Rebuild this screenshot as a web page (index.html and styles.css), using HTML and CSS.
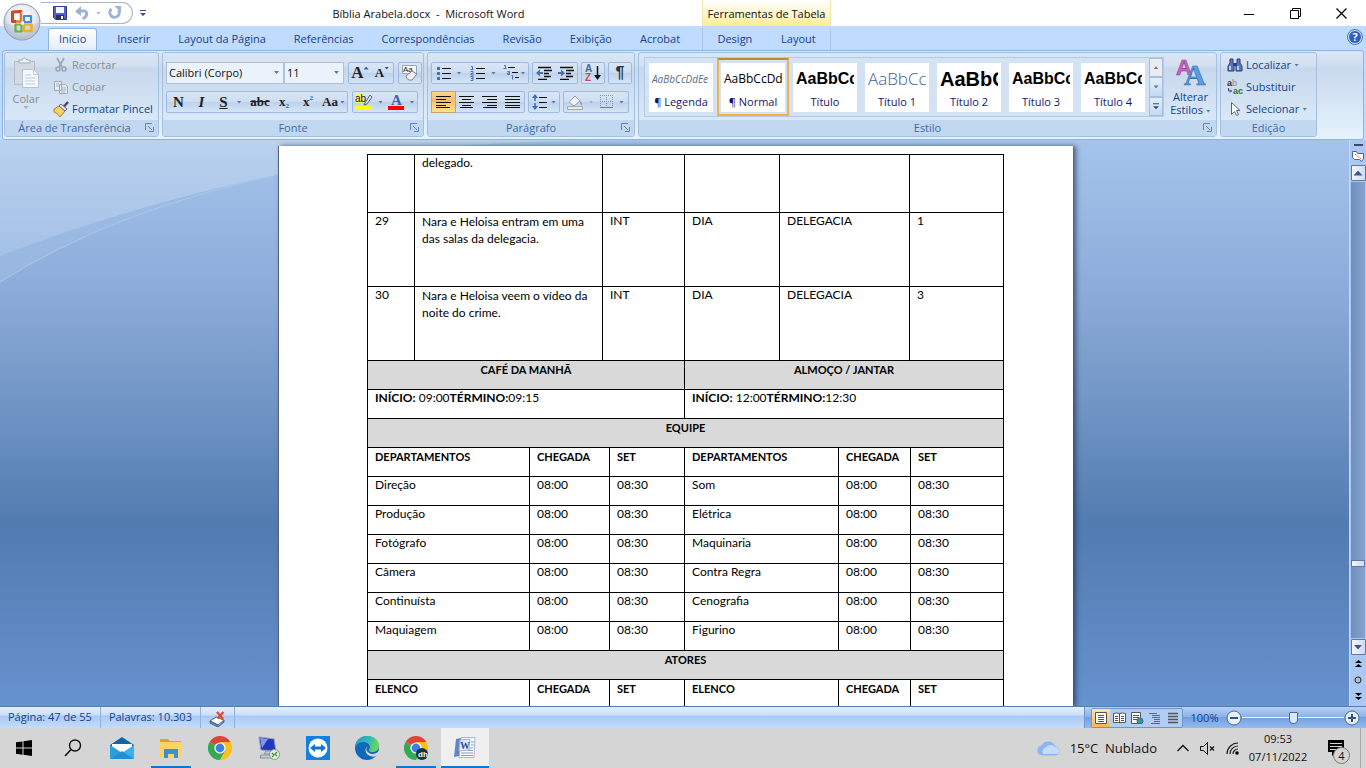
FILE: index.html
```html
<!DOCTYPE html>
<html lang="pt-BR">
<head>
  <meta charset="UTF-8">
  <meta name="viewport" content="width=device-width, initial-scale=1.0">
  <title>Bíblia Arabela.docx - Microsoft Word</title>
  <link rel="stylesheet" href="styles.css">
</head>
<body>
  <!-- Title bar -->
  <header class="titlebar">
    <button class="office-button" aria-label="Botão Office">
      <svg width="38" height="38" viewBox="0 0 38 38">
        <defs>
          <radialGradient id="orb" cx="50%" cy="35%" r="65%">
            <stop offset="0" stop-color="#ffffff"/>
            <stop offset="0.6" stop-color="#e4e9f1"/>
            <stop offset="1" stop-color="#a9b4c6"/>
          </radialGradient>
        </defs>
        <circle cx="19" cy="19" r="18" fill="url(#orb)" stroke="#8b97ab"/>
        <path d="M2 20a17 17 0 0 0 34 0q-17 5-34 0z" fill="#b9c4d6" opacity="0.5"/>
        <g fill="none" stroke-linejoin="round">
          <path d="M18 9V8.500L9.500 9v9.500H13" stroke="#d8431a" stroke-width="3"/>
          <path d="M13 18.500h5V10" stroke="#e8742a" stroke-width="2.600"/>
          <path d="M21 13h7v6h-7z" stroke="#3f8fd6" stroke-width="2.200"/>
          <path d="M12.500 21.500h6v7h-6z" stroke="#6fae3a" stroke-width="2.200"/>
          <path d="M21 21.500h7.500v6.500H21z" stroke="#f2b01e" stroke-width="2.600"/>
        </g>
        <path d="M18 18.500h3v3h-3z" fill="#fff"/>
      </svg>
    </button>
    <div class="quick-access">
      <button aria-label="Salvar">
        <svg width="16" height="16" viewBox="0 0 16 16">
          <path d="M1.500 1.500h13v13h-11l-2-2z" fill="#5561c4" stroke="#2c3786"/>
          <path d="M4 2h8v6H4z" fill="#f4f6ff"/>
          <path d="M4 10h8v4H4z" fill="#2b2f5e"/>
          <path d="M9 11h2v3H9z" fill="#fff"/>
        </svg>
      </button>
      <button class="undo" aria-label="Desfazer">
        <svg width="15" height="14" viewBox="0 0 15 14">
          <path d="M4 5h5.500q3.500 1 1.500 5l-3 3" fill="none" stroke="#9db3d6" stroke-width="3"/>
          <path d="M0 5.500L6 0v10z" fill="#9db3d6"/>
        </svg>
        <span class="arrow pale"></span>
      </button>
      <button aria-label="Refazer">
        <svg width="14" height="14" viewBox="0 0 14 14">
          <path d="M3.500 3A4.700 4.700 0 1 0 10.500 4" fill="none" stroke="#9db3d6" stroke-width="3"/>
          <path d="M6.500 0H13v6.500z" fill="#9db3d6"/>
        </svg>
      </button>
    </div>
    <button class="qat-more" aria-label="Personalizar"><span class="arrow barred"></span></button>
    <div class="doc-title">Bíblia Arabela.docx&nbsp; -&nbsp; Microsoft Word</div>
    <div class="context-title">Ferramentas de Tabela</div>
    <div class="window-controls">
      <button aria-label="Minimizar"><svg width="11" height="11"><path d="M0 6.500h10" stroke="#000"/></svg></button>
      <button aria-label="Restaurar"><svg width="11" height="11"><path d="M.5 2.500h8v8h-8zM2.500 2.500v-2h8v8h-2" fill="none" stroke="#000"/></svg></button>
      <button aria-label="Fechar"><svg width="11" height="11"><path d="M.5.5l10 10M10.500.5l-10 10" stroke="#000" stroke-width="1.200"/></svg></button>
    </div>
  </header>

  <!-- Ribbon tabs -->
  <nav class="tabs">
    <a href="#" class="tab active">Início</a>
    <a href="#" class="tab">Inserir</a>
    <a href="#" class="tab">Layout da Página</a>
    <a href="#" class="tab">Referências</a>
    <a href="#" class="tab">Correspondências</a>
    <a href="#" class="tab">Revisão</a>
    <a href="#" class="tab">Exibição</a>
    <a href="#" class="tab">Acrobat</a>
    <div class="context-tabs">
      <a href="#" class="tab">Design</a>
      <a href="#" class="tab">Layout</a>
    </div>
    <button class="help" aria-label="Ajuda">?</button>
  </nav>

  <!-- Ribbon -->
  <div class="ribbon">
    <section class="group clipboard">
      <div class="group-body">
        <button class="big disabled">
          <svg width="28" height="32" viewBox="0 0 28 32">
            <path d="M2.500 4.500h20v23h-20z" fill="#d3dae3" stroke="#b2bccb"/>
            <path d="M7 6V3h3q2-4 5 0h3v3z" fill="#eceff4" stroke="#a3aebf"/>
            <path d="M10.500 12.500h11l5 5v13h-16z" fill="#f7f9fc" stroke="#b4c2d6"/>
            <path d="M21.500 12.500v5h5M13 18h6M13 21h10M13 24h10M13 27h10" fill="none" stroke="#bccbe0"/>
          </svg>
          Colar
          <span class="arrow pale"></span>
        </button>
        <div class="stack">
          <button class="disabled">
            <svg width="16" height="16" viewBox="0 0 16 16"><path d="M4 1l5 9M11 1L6 10" stroke="#98a3b4" stroke-width="1.600"/><circle cx="5" cy="12" r="2" fill="none" stroke="#98a3b4" stroke-width="1.500"/><circle cx="11" cy="12" r="2" fill="none" stroke="#98a3b4" stroke-width="1.500"/></svg>
            Recortar
          </button>
          <button class="disabled">
            <svg width="16" height="16" viewBox="0 0 16 16"><path d="M1.500 2.500h7v9h-7zM6.500 5.500h6l2 2v7h-8z" fill="#e6ebf3" stroke="#9ca8bb"/><path d="M3 5h3M3 7h3M8 9h5M8 11h5M8 13h4" stroke="#a8b3c5"/></svg>
            Copiar
          </button>
          <button>
            <svg width="16" height="16" viewBox="0 0 16 16"><path d="M1 8l5-3 6 5-5 6q-2-4-6-5z" fill="#f5d469" stroke="#a98322"/><path d="M6 5l2-2 6 5-2 2z" fill="#e6e6ee" stroke="#666a80"/><path d="M11 5.500L15 1" stroke="#4c4670" stroke-width="2.500"/></svg>
            Formatar Pincel
          </button>
        </div>
      </div>
      <div class="group-name">Área de Transferência
        <button class="launcher" aria-label="Opções"><svg width="9" height="9"><path d="M.5 7V.5H7" fill="none" stroke="#6384b8"/><path d="M3 3l4 4M8.500 4v4.500H4" fill="none" stroke="#6384b8"/></svg></button>
      </div>
    </section>

    <section class="group font">
      <div class="group-body rows">
        <div class="row">
          <div class="combos">
            <label class="combo family"><select aria-label="Fonte"><option>Calibri (Corpo)</option></select></label>
            <label class="combo size"><select aria-label="Tamanho"><option>11</option></select></label>
          </div>
          <div class="cluster">
            <button class="serif grow">A<i class="caret up"></i></button>
            <button class="serif shrink">A<i class="caret"></i></button>
          </div>
          <div class="cluster">
            <button aria-label="Limpar formatação">
              <svg width="18" height="18" viewBox="0 0 18 18"><path d="M1.500 1.500h14v8h-14z" fill="#fff" stroke="#99a5b8"/><text x="2" y="8" font-size="8" font-family="Liberation Sans" fill="#111">Aa</text><path d="M5 12l6-5 5 3-5 6q-5 1-6-4z" fill="#f2eef4" stroke="#7d7f92"/></svg>
            </button>
          </div>
        </div>
        <div class="row">
          <div class="cluster wide">
            <button class="serif"><b>N</b></button>
            <button class="serif"><i>I</i></button>
            <button class="serif drop"><u>S</u><span class="arrow"></span></button>
            <button class="serif small"><s>abc</s></button>
            <button class="serif small">x<sub>2</sub></button>
            <button class="serif small">x<sup>2</sup></button>
            <button class="serif small tight">Aa<span class="arrow"></span></button>
          </div>
          <div class="cluster">
            <button class="drop" aria-label="Realce">
              <svg width="18" height="18" viewBox="0 0 18 18"><path d="M0 1h9v9H0z" fill="#fff36b"/><text x="0" y="9" font-size="10" font-family="Liberation Sans" fill="#111">ab</text><path d="M10 10l5-8 2 2-5 7-3 1z" fill="#dce4f0" stroke="#55617a"/><path d="M0 13h17v4H0z" fill="#ffff00"/></svg>
              <span class="arrow"></span>
            </button>
            <button class="drop" aria-label="Cor da fonte">
              <svg width="17" height="18" viewBox="0 0 17 18"><text x="3" y="12" font-size="15" font-weight="bold" font-family="Liberation Serif" fill="#3f62a8">A</text><path d="M0 13h16v4H0z" fill="#ff0000"/></svg>
              <span class="arrow"></span>
            </button>
          </div>
        </div>
      </div>
      <div class="group-name">Fonte
        <button class="launcher" aria-label="Opções"><svg width="9" height="9"><path d="M.5 7V.5H7" fill="none" stroke="#6384b8"/><path d="M3 3l4 4M8.500 4v4.500H4" fill="none" stroke="#6384b8"/></svg></button>
      </div>
    </section>

    <section class="group paragraph">
      <div class="group-body rows">
        <div class="row">
          <div class="cluster lists">
            <button aria-label="Marcadores">
              <svg width="14" height="14"><path d="M5 2.500h9M5 7.500h9M5 12.500h9" stroke="#111"/><path d="M0 1h3v3H0zM0 6h3v3H0zM0 11h3v3H0z" fill="#4d6fae"/></svg>
              <span class="arrow"></span>
            </button>
            <button aria-label="Numeração">
              <svg width="15" height="15"><path d="M6 2.500h9M6 7.500h9M6 12.500h9" stroke="#111"/><path d="M1 .5h1.500v3M.5 3.500h3M.5 5.500H3v2H1v1.500h3M.5 10.500H3v2H1M3 12.500v2H.5" fill="none" stroke="#4d6fae"/></svg>
              <span class="arrow"></span>
            </button>
            <button aria-label="Lista de vários níveis">
              <svg width="16" height="16"><path d="M5 2.500h7M9 7.500h6M12 12.500h4" stroke="#111"/><path d="M1 .5h1.500v3M.5 3.500h3M4.500 6.500h2v3h-2v-1.500h2M8.500 10.500h1v4" fill="none" stroke="#4d6fae"/></svg>
              <span class="arrow"></span>
            </button>
          </div>
          <div class="cluster">
            <button aria-label="Diminuir recuo">
              <svg width="16" height="14"><path d="M2 1.500h13M8 4.500h8M8 7.500h5M8 10.500h7M2 13.500h9" stroke="#111" stroke-width="1.500"/><path d="M7 7H3" stroke="#4d6fae" stroke-width="2"/><path d="M0 7l4-3.500v7z" fill="#4d6fae"/></svg>
            </button>
            <button aria-label="Aumentar recuo">
              <svg width="16" height="14"><path d="M2 1.500h13M8 4.500h8M8 7.500h5M8 10.500h7M2 13.500h9" stroke="#111" stroke-width="1.500"/><path d="M0 7h4" stroke="#4d6fae" stroke-width="2"/><path d="M7 7L3 3.500v7z" fill="#4d6fae"/></svg>
            </button>
          </div>
          <div class="cluster">
            <button aria-label="Classificar">
              <svg width="16" height="18"><text x="0" y="8" font-size="10" font-weight="bold" font-family="Liberation Sans" fill="#4766a5">A</text><text x="0" y="17" font-size="10" font-weight="bold" font-family="Liberation Sans" fill="#c05050">Z</text><path d="M12.500 2v11" stroke="#111" stroke-width="1.500"/><path d="M9 11h7l-3.500 5z" fill="#111"/></svg>
            </button>
          </div>
          <div class="cluster">
            <button class="pilcrow">¶</button>
          </div>
        </div>
        <div class="row">
          <div class="cluster aligns">
            <button class="on" aria-label="Esquerda"><svg width="15" height="12"><path d="M0 .5h15M0 3.500h10M0 6.500h15M0 9.500h10M0 11.500h14" stroke="#111"/></svg></button>
            <button aria-label="Centralizar"><svg width="15" height="12"><path d="M0 .5h15M3 3.500h9M0 6.500h15M3 9.500h9M1 11.500h13" stroke="#111"/></svg></button>
            <button aria-label="Direita"><svg width="15" height="12"><path d="M0 .5h15M5 3.500h10M0 6.500h15M5 9.500h10M1 11.500h14" stroke="#111"/></svg></button>
            <button aria-label="Justificar"><svg width="15" height="12"><path d="M0 .5h15M0 3.500h15M0 6.500h15M0 9.500h15M0 11.500h15" stroke="#111"/></svg></button>
          </div>
          <div class="cluster">
            <button class="spacing" aria-label="Espaçamento"><svg width="16" height="16"><path d="M7 3.500h8M7 8.500h8M7 13.500h8" stroke="#111"/><path d="M3 3v10" stroke="#3f6bb3" stroke-width="1.500" stroke-dasharray="4 2"/><path d="M0 4l3-4 3 4zM0 12l3 4 3-4z" fill="#3f6bb3"/></svg><span class="arrow"></span></button>
          </div>
          <div class="cluster">
            <button class="drop" aria-label="Sombreamento"><svg width="17" height="16"><path d="M2 8l6-6 5 5-6 5z" fill="#eef1f6" stroke="#98a2b3"/><path d="M12 6q4 2 3 6-2-2-3-6z" fill="#98a2b3"/><path d="M.5 12.500h15v3H.5z" fill="#e9ecea" stroke="#a5a99f"/></svg><span class="arrow pale"></span></button>
            <button class="drop" aria-label="Bordas"><svg width="14" height="14"><path d="M.5 0v13M6.500 0v13M12.500 0v13M0 .5h13M0 6.500h13" stroke="#8192b2" stroke-dasharray="1 1" fill="none"/><path d="M0 12.500h13" stroke="#6c7991"/></svg><span class="arrow"></span></button>
          </div>
        </div>
      </div>
      <div class="group-name">Parágrafo
        <button class="launcher" aria-label="Opções"><svg width="9" height="9"><path d="M.5 7V.5H7" fill="none" stroke="#6384b8"/><path d="M3 3l4 4M8.500 4v4.500H4" fill="none" stroke="#6384b8"/></svg></button>
      </div>
    </section>

    <section class="group styles">
      <div class="group-body">
        <div class="gallery">
          <button class="style"><span class="sample s-legend">AaBbCcDdEe</span><span class="style-name">¶ Legenda</span></button>
          <button class="style selected"><span class="sample s-normal">AaBbCcDd</span><span class="style-name">¶ Normal</span></button>
          <button class="style"><span class="sample s-bold">AaBbCc</span><span class="style-name">Título</span></button>
          <button class="style"><span class="sample s-light">AaBbCc</span><span class="style-name">Título 1</span></button>
          <button class="style"><span class="sample s-large">AaBbC</span><span class="style-name">Título 2</span></button>
          <button class="style"><span class="sample s-bold">AaBbCc</span><span class="style-name">Título 3</span></button>
          <button class="style"><span class="sample s-bold">AaBbCc</span><span class="style-name">Título 4</span></button>
          <div class="gallery-scroll">
            <button class="off" aria-label="Acima"><span class="arrow up"></span></button>
            <button aria-label="Abaixo"><span class="arrow"></span></button>
            <button aria-label="Mais"><span class="arrow barred"></span></button>
          </div>
        </div>
        <button class="big change-styles">
          <svg width="30" height="30" viewBox="0 0 30 30">
            <text x="0" y="18" font-size="22" font-weight="bold" font-family="Liberation Sans" fill="#c765c0" stroke="#8d3b92" stroke-width=".6">A</text>
            <text x="8" y="28" font-size="30" font-weight="bold" font-family="Liberation Serif" fill="#5a9ee0" stroke="#2c66ae" stroke-width=".6">A</text>
          </svg>
          <span>Alterar</span>
          <span>Estilos <i class="arrow"></i></span>
        </button>
      </div>
      <div class="group-name">Estilo
        <button class="launcher" aria-label="Opções"><svg width="9" height="9"><path d="M.5 7V.5H7" fill="none" stroke="#6384b8"/><path d="M3 3l4 4M8.500 4v4.500H4" fill="none" stroke="#6384b8"/></svg></button>
      </div>
    </section>

    <section class="group editing">
      <div class="group-body">
        <div class="stack">
          <button>
            <svg width="16" height="14" viewBox="0 0 16 14"><path d="M3 1h3v4l1 2v6H1V8l2-3zM10 1h3v4l2 3v5H9V7l1-2z" fill="#5d78b4" stroke="#263f7e"/><path d="M6 5h4v3H6z" fill="#263f7e"/><path d="M3 8v4M11 8v4" stroke="#dce7fb" stroke-width="1.500"/></svg>
            Localizar <span class="arrow"></span>
          </button>
          <button>
            <svg width="16" height="16" viewBox="0 0 16 16"><text x="0" y="7" font-size="9" font-weight="bold" font-family="Liberation Sans" fill="#333">a</text><text x="5" y="7" font-size="9" font-family="Liberation Sans" fill="#888">b</text><text x="6" y="15" font-size="9" font-weight="bold" font-family="Liberation Sans" fill="#227a30">ac</text><path d="M1.500 9v3h3M3 10.500l1.500 1.500L3 13.500" fill="none" stroke="#334a80"/></svg>
            Substituir
          </button>
          <button>
            <svg width="16" height="16" viewBox="0 0 16 16"><path d="M4.500 1.500v12l3-3 2 4 2-1-2-4h3.500z" fill="#fff" stroke="#59657c"/></svg>
            Selecionar <span class="arrow"></span>
          </button>
        </div>
      </div>
      <div class="group-name">Edição</div>
    </section>
  </div>

  <!-- Document -->
  <main class="workspace">
    <svg class="swoosh" width="620" height="150" viewBox="0 0 620 150">
      <defs>
        <linearGradient id="sky" x1="0" y1="0" x2="0" y2="1">
          <stop offset="0" stop-color="#bad1ef"/>
          <stop offset="1" stop-color="#a4c1e6"/>
        </linearGradient>
      </defs>
      <path d="M0 0h620Q420 0 279 34Q110 72 0 142z" fill="#9dbbe2" opacity="0.700"/>
      <path d="M0 142Q110 72 279 34" fill="none" stroke="#a9c8ec"/>
      <path d="M0 0h620Q420 0 279 34Q130 66 0 116z" fill="url(#sky)"/>
    </svg>
    <div class="canvas">
      <article class="page">
        <table class="scenes">
          <colgroup><col class="w47"><col class="w188"><col class="w82"><col class="w95"><col class="w130"><col class="w94"></colgroup>
          <tr class="cut"><td></td><td>delegado.</td><td></td><td></td><td></td><td></td></tr>
          <tr><td>29</td><td class="action">Nara e Heloisa entram em uma das salas da delegacia.</td><td>INT</td><td>DIA</td><td>DELEGACIA</td><td>1</td></tr>
          <tr><td>30</td><td class="action">Nara e Heloisa veem o vídeo da noite do crime.</td><td>INT</td><td>DIA</td><td>DELEGACIA</td><td>3</td></tr>
        </table>
        <table class="crew">
          <colgroup><col class="w162"><col class="w80"><col class="w75"><col class="w154"><col class="w72"><col class="w93"></colgroup>
          <tr class="band"><th colspan="3">CAFÉ DA MANHÃ</th><th colspan="3">ALMOÇO / JANTAR</th></tr>
          <tr><td colspan="3"><b>INÍCIO:</b> 09:00<b>TÉRMINO:</b>09:15</td><td colspan="3"><b>INÍCIO:</b> 12:00<b>TÉRMINO:</b>12:30</td></tr>
          <tr class="band"><th colspan="6">EQUIPE</th></tr>
          <tr><th>DEPARTAMENTOS</th><th>CHEGADA</th><th>SET</th><th>DEPARTAMENTOS</th><th>CHEGADA</th><th>SET</th></tr>
          <tr><td>Direção</td><td>08:00</td><td>08:30</td><td>Som</td><td>08:00</td><td>08:30</td></tr>
          <tr><td>Produção</td><td>08:00</td><td>08:30</td><td>Elétrica</td><td>08:00</td><td>08:30</td></tr>
          <tr><td>Fotógrafo</td><td>08:00</td><td>08:30</td><td>Maquinaria</td><td>08:00</td><td>08:30</td></tr>
          <tr><td>Câmera</td><td>08:00</td><td>08:30</td><td>Contra Regra</td><td>08:00</td><td>08:30</td></tr>
          <tr><td>Continuísta</td><td>08:00</td><td>08:30</td><td>Cenografia</td><td>08:00</td><td>08:30</td></tr>
          <tr><td>Maquiagem</td><td>08:00</td><td>08:30</td><td>Figurino</td><td>08:00</td><td>08:30</td></tr>
          <tr class="band"><th colspan="6">ATORES</th></tr>
          <tr><th>ELENCO</th><th>CHEGADA</th><th>SET</th><th>ELENCO</th><th>CHEGADA</th><th>SET</th></tr>
        </table>
      </article>
    </div>
    <div class="scrollbar">
      <span class="split"></span>
      <button class="plain" aria-label="Régua"><svg width="12" height="12"><path d="M.5 1.500h4l1 2h6v5l-2 3-2-2h-5l-2-2z" fill="#fff" stroke="#55607a"/><path d="M3 4l6 5" stroke="#c34b4b" stroke-dasharray="2 1"/></svg></button>
      <button class="scroll-btn" aria-label="Rolar para cima"><i class="caret up"></i></button>
      <div class="track"><span class="thumb"></span></div>
      <button class="scroll-btn" aria-label="Rolar para baixo"><i class="caret"></i></button>
      <button class="plain" aria-label="Página anterior"><svg width="7" height="8"><path d="M0 3l3.500-3L7 3zM0 7l3.500-3L7 7z"/></svg></button>
      <button class="plain" aria-label="Selecionar objeto"><svg width="8" height="8"><circle cx="4" cy="4" r="3" fill="#b9bfc9" stroke="#222"/></svg></button>
      <button class="plain" aria-label="Próxima página"><svg width="7" height="8"><path d="M0 1l3.500 3L7 1zM0 5l3.500 3L7 5z"/></svg></button>
    </div>
  </main>

  <!-- Status bar -->
  <footer class="statusbar">
    <span class="status-item">Página: 47 de 55</span>
    <span class="status-item">Palavras: 10.303</span>
    <button class="status-item proof" aria-label="Revisão">
      <svg width="17" height="16" viewBox="0 0 17 16"><path d="M1 10l6-4 8 3-6 5z" fill="#fff" stroke="#46608f"/><path d="M1 10v2l8 4v-2zM9 16l6-5V9" fill="#6f8fc8" stroke="#46608f"/><path d="M8 1l6 7M14.500 1L8.500 7.500" stroke="#e8452a" stroke-width="2.200"/></svg>
    </button>
    <div class="status-right">
      <div class="views">
        <button class="on" aria-label="Layout de impressão"><svg width="12" height="12"><path d="M.5.5h11v11H.5z" fill="#fff" stroke="#555"/><path d="M3 3.500h6M3 5.500h6M3 7.500h6M3 9.500h6" stroke="#555"/></svg></button>
        <button aria-label="Leitura"><svg width="13" height="12"><path d="M.5 1.500q3-1 6 0 3-1 6 0v9h-12z" fill="#fff" stroke="#555"/><path d="M6.500 1v10M2 4.500h3M2 6.500h3M2 8.500h3M8 4.500h3M8 6.500h3M8 8.500h3" stroke="#555"/></svg></button>
        <button aria-label="Web"><svg width="13" height="12"><path d="M.5.5h9v11h-9z" fill="#fff" stroke="#555"/><path d="M2 3.500h6M2 5.500h6M2 7.500h4" stroke="#555"/><circle cx="9" cy="9" r="3" fill="#3a9b8b" stroke="#35659e"/></svg></button>
        <button aria-label="Tópicos"><svg width="12" height="12"><path d="M0 1.500h8M3 3.500h8M3 5.500h8M5 7.500h6M5 9.500h6M2 11.500h9" stroke="#666"/></svg></button>
        <button aria-label="Rascunho"><svg width="12" height="12"><path d="M1 1.500h10M1 4.500h10M1 7.500h10M1 10.500h10" stroke="#555" stroke-width="1.300"/></svg></button>
      </div>
      <button class="zoom-value">100%</button>
      <button class="zoom-btn" aria-label="Reduzir"><svg width="16" height="16"><circle cx="8" cy="8" r="7" fill="#e6f0fd" stroke="#4a6898"/><path d="M4 8h8" stroke="#35527f" stroke-width="2"/></svg></button>
      <input type="range" class="zoom-slider" aria-label="Zoom" min="0" max="100" value="50">
      <button class="zoom-btn" aria-label="Ampliar"><svg width="16" height="16"><circle cx="8" cy="8" r="7" fill="#e6f0fd" stroke="#4a6898"/><path d="M4 8h8M8 4v8" stroke="#35527f" stroke-width="2"/></svg></button>
    </div>
  </footer>

  <!-- Windows taskbar -->
  <div class="taskbar">
    <button aria-label="Iniciar"><svg width="16" height="16"><path d="M0 2.300l6.500-.9v6.200H0zM7.500 1.200L16 0v7.600H7.500zM0 8.500h6.500v6.200L0 13.800zM7.500 8.500H16V16l-8.500-1.200z"/></svg></button>
    <button aria-label="Pesquisar"><svg width="18" height="18"><circle cx="11" cy="6.500" r="5.500" fill="none" stroke="#111" stroke-width="1.400"/><path d="M7 10.500l-6 6.500" stroke="#111" stroke-width="1.500"/></svg></button>
    <button aria-label="Email">
      <svg width="26" height="24" viewBox="0 0 26 24"><path d="M1 9L13 1l12 8v4H1z" fill="#1266a8"/><path d="M3 8h20v9H3z" fill="#fff"/><path d="M1 9l12 8-12 6z" fill="#2a9fe0"/><path d="M25 9L13 17l12 6z" fill="#37b4f0"/><path d="M1 23l12-8 12 8z" fill="#1f8fd8"/></svg>
    </button>
    <button class="running" aria-label="Explorador">
      <svg width="24" height="20" viewBox="0 0 24 20"><path d="M1 1h8l2 2h11v4H1z" fill="#e0a126"/><path d="M1 4h22v15H1z" fill="#fbd467"/><path d="M5 11h14v9h-4v-4H9v4H5z" fill="#3e8ed6"/></svg>
    </button>
    <button aria-label="Chrome">
      <svg width="24" height="24" viewBox="0 0 24 24"><path d="M12 12L1.600 6a12 12 0 0 1 20.800 0z" fill="#df4435"/><path d="M12 12L1.600 6A12 12 0 0 0 12 24l5-9z" fill="#34a853"/><path d="M12 24A12 12 0 0 0 22.400 6H12l5.200 9z" fill="#fbc116"/><circle cx="12" cy="12" r="5.600" fill="#fff"/><circle cx="12" cy="12" r="4.400" fill="#3f7ee8"/></svg>
    </button>
    <button aria-label="Área de trabalho remota">
      <svg width="24" height="24" viewBox="0 0 24 24"><path d="M2 1l15 2 2 12-15-1z" fill="#2437b8" stroke="#8c97c8"/><path d="M3 2l8 1-6 9z" fill="#7f97ee"/><path d="M9 15h6v3H7zM4 19h11v3H3z" fill="#c7ccd6" stroke="#8a91a0"/><circle cx="17.500" cy="18.500" r="5" fill="#e6ece4" stroke="#8a9a86"/><path d="M15 17l2 2-2 2M20 16l-2 2 2 2" fill="none" stroke="#3b8f35" stroke-width="1.200"/></svg>
    </button>
    <button aria-label="TeamViewer">
      <svg width="24" height="24" viewBox="0 0 24 24"><path d="M0 0h24v24H0z" fill="#1180e0"/><circle cx="12" cy="12" r="9.500" fill="#fff"/><path d="M4 12l5-4v2.500h6V8l5 4-5 4v-2.500H9V16z" fill="#1172cf"/></svg>
    </button>
    <button aria-label="Edge">
      <svg width="24" height="24" viewBox="0 0 24 24">
        <defs><linearGradient id="edge" x1="0" y1="0" x2="1" y2="0.300"><stop offset="0" stop-color="#2196d8"/><stop offset="0.600" stop-color="#31bdb5"/><stop offset="1" stop-color="#65d45f"/></linearGradient></defs>
        <circle cx="12" cy="12" r="12" fill="#1268b8"/>
        <path d="M0 12C0 4 6 0 12 0c8 0 12 5 12 10 0 4-3 6-7 6-3 0-4-2-2-4 0-4-3-6-7-6s-7 3-8 6z" fill="url(#edge)"/>
        <path d="M13 10c-3 2-2 7 4 8 3 0 5-1 7-3v9h-2l1-5c-3 2-5 2-8 1-5-2-6-8-2-10z" fill="#d5d5d5"/>
      </svg>
    </button>
    <button class="running" aria-label="Chrome perfil">
      <svg width="24" height="24" viewBox="0 0 24 24"><path d="M12 12L1.600 6a12 12 0 0 1 20.800 0z" fill="#df4435"/><path d="M12 12L1.600 6A12 12 0 0 0 12 24l5-9z" fill="#34a853"/><path d="M12 24A12 12 0 0 0 22.400 6H12l5.200 9z" fill="#fbc116"/><circle cx="12" cy="12" r="5.600" fill="#fff"/><circle cx="12" cy="12" r="4.400" fill="#3f7ee8"/><circle cx="18" cy="18" r="6" fill="#0e3440"/><text x="14" y="21" font-size="8" font-weight="bold" font-family="Liberation Sans" fill="#fff">dh</text></svg>
    </button>
    <button class="running current" aria-label="Word">
      <svg width="24" height="24" viewBox="0 0 24 24"><path d="M8 1.500h14l-1 20H6z" fill="#fff" stroke="#aab6cc"/><path d="M16 12h4M15 14.500h5M8 17h12M8 19.500h12M18 6h3M18 9h3" stroke="#7c97c9"/><path d="M3 3L1 21l5-1L8 2z" fill="#5f86c8"/><path d="M7 4l10-1-1 11-10 1z" fill="#e3ebf8" stroke="#9db2d8"/><text x="7" y="13" font-size="10" font-weight="bold" font-family="Liberation Serif" fill="#2c4f9c">W</text></svg>
    </button>

    <div class="tray">
      <button class="weather">
        <svg width="26" height="16" viewBox="0 0 26 16"><path d="M6 15.500a5 5 0 0 1-.5-9.900A7.500 7.500 0 0 1 19 6a5 5 0 0 1 1.500 9.500z" fill="#8db5ef"/><path d="M7 14a5 5 0 0 1 3-7 6 6 0 0 1 9 0 4 4 0 0 1 3 7z" fill="#c5dbfa"/></svg>
        <span>15°C&nbsp; Nublado</span>
      </button>
      <button aria-label="Ícones ocultos"><svg width="12" height="8"><path d="M.5 7L6 1.500 11.500 7" fill="none" stroke="#111" stroke-width="1.300"/></svg></button>
      <button aria-label="Volume"><svg width="15" height="13"><path d="M.5 4.500h3l4-4v12l-4-4h-3z" fill="none" stroke="#111"/><path d="M10 4.500l4 4M14 4.500l-4 4" stroke="#111" stroke-width="1.200"/></svg></button>
      <button aria-label="Rede"><svg width="14" height="13"><path d="M1 12A11 11 0 0 1 12 1M4 12a8 8 0 0 1 8-8M7 12a5 5 0 0 1 5-5" fill="none" stroke="#222" stroke-width="1.200"/><circle cx="11" cy="11" r="1.800"/></svg></button>
      <button class="clock"><time>09:53</time><time>07/11/2022</time></button>
      <button class="notify" aria-label="Notificações"><svg width="16" height="16"><path d="M0 0h16v12h-8l-4 4v-4H0z"/><path d="M2 3.500h12M2 6.500h12M2 9.500h7" stroke="#d5d5d5"/></svg><span class="badge">4</span></button>
    </div>
  </div>
</body>
</html>
```
FILE: styles.css
```css
* {
  box-sizing: border-box;
}
body {
  margin: 0;
  height: 100vh;
  display: flex;
  flex-direction: column;
  overflow: hidden;
  font-family: "Open Sans", "Noto Sans", sans-serif;
  font-size: 11px;
  line-height: 14px;
  color: #15428b;
  background-color: #bfdbff;
}
button {
  font: inherit;
  color: inherit;
  background: none;
  border: none;
  padding: 0;
  display: flex;
  align-items: center;
  justify-content: center;
}
svg {
  display: block;
  flex: none;
}

/* small drop-down triangles */
.arrow {
  display: inline-block;
  flex: none;
  width: 5px;
  height: 3px;
  background-color: #5a7cb0;
  clip-path: polygon(0 0, 100% 0, 50% 100%);
}
.arrow.up {
  clip-path: polygon(50% 0, 100% 100%, 0 100%);
}
.arrow.pale {
  background-color: #a5b1c4;
}
.arrow.barred {
  height: 6px;
  width: 6px;
  background-color: #2f4f86;
  clip-path: polygon(0 0, 100% 0, 100% 17%, 0 17%, 0 50%, 100% 50%, 50% 100%, 0 50%);
}
.caret {
  width: 5px;
  height: 3px;
  background-color: #3c5a91;
  clip-path: polygon(0 0, 100% 0, 50% 100%);
}
.caret.up {
  clip-path: polygon(50% 0, 100% 100%, 0 100%);
}

/* title bar */
.titlebar {
  flex: none;
  height: 26px;
  display: flex;
  align-items: center;
  position: relative;
  padding-right: 2px;
  background-color: #fff;
  color: #111;
}
.office-button {
  position: absolute;
  left: 3px;
  top: 3px;
  z-index: 2;
}
.quick-access {
  width: 92px;
  height: 22px;
  margin-left: 41px;
  padding-left: 11px;
  display: flex;
  align-items: center;
  gap: 7px;
  border: 1px solid #a9b3c4;
  border-left: none;
  border-radius: 0 11px 11px 0;
}
.undo {
  gap: 6px;
}
.qat-more {
  width: 20px;
  height: 20px;
}
.doc-title {
  flex: 0 1 549px;
  padding: 2px 0 0 2px;
  text-align: center;
  white-space: nowrap;
}
.context-title {
  width: 129px;
  height: 26px;
  padding-top: 7px;
  text-align: center;
  white-space: nowrap;
  border: 1px solid #eee3ae;
  border-width: 0 1px;
  background: linear-gradient(#ffffff, #fdf5c8 60%, #ffed8e);
}
.window-controls {
  display: flex;
  margin-left: auto;
}
.window-controls button {
  width: 46px;
  height: 26px;
}

/* tabs */
.tabs {
  flex: none;
  height: 24px;
  display: flex;
  padding: 2px 4px 0 48px;
  background-color: #bfdbff;
}
.tab {
  padding: 4px 14px 0;
  color: #15428b;
  text-decoration: none;
  white-space: nowrap;
}
.tab.active {
  padding: 3px 10px 0;
  margin-right: 6px;
  border: 1px solid #8db2e3;
  border-bottom: none;
  border-radius: 3px 3px 0 0;
  background: linear-gradient(#ffffff, #e3eefb);
}
.context-tabs {
  width: 129px;
  display: flex;
  justify-content: space-around;
  margin-left: 8px;
  border: 1px solid #a8c4ea;
  border-width: 0 1px;
}
.context-tabs .tab {
  padding: 4px 0 0;
}
.help {
  width: 14px;
  height: 14px;
  margin: 2px 0 0 auto;
  border-radius: 50%;
  border: 1px solid #dce9ff;
  outline: 1px solid #4c74b8;
  background-color: #2f5fc4;
  color: #fff;
  font-weight: bold;
}

/* ribbon */
.ribbon {
  flex: none;
  height: 90px;
  margin: 0 2px;
  padding: 1px 1px 2px;
  display: flex;
  gap: 3px;
  border: 1px solid #8db2e3;
  border-radius: 3px;
  background: linear-gradient(#dbe6f4, #cbdcf0 18%, #c9daee 20%, #e4f3fd);
  overflow: hidden;
}
.group {
  flex: none;
  display: flex;
  flex-direction: column;
  border: 1px solid #a5bfdf;
  border-radius: 3px;
  overflow: hidden;
  background: linear-gradient(#dce7f5, #d2dfef 16%, #c8d8ec 18%, #d8e8f8 80%);
}
.clipboard {
  width: 155px;
}
.font {
  width: 262px;
}
.paragraph {
  width: 208px;
}
.styles {
  width: 579px;
}
.editing {
  width: 97px;
}
.group-body {
  flex: 1;
  display: flex;
}
.group-name {
  flex: none;
  position: relative;
  height: 16px;
  line-height: 16px;
  text-align: center;
  color: #3e6aaa;
  background-color: #c2d8f0;
}
.clipboard .group-name {
  padding-right: 14px;
}
.launcher {
  position: absolute;
  right: 4px;
  top: 3px;
}
.big {
  width: 42px;
  flex-direction: column;
  justify-content: flex-start;
  padding-top: 4px;
}
.big svg {
  margin-bottom: 3px;
}
.disabled {
  color: #8d8d8d;
}
.stack {
  display: flex;
  flex-direction: column;
  padding: 1px 0 0 6px;
}
.stack button {
  height: 22px;
  gap: 3px;
  justify-content: flex-start;
  white-space: nowrap;
}
.rows {
  flex-direction: column;
  padding: 9px 3px 0;
  gap: 7px;
}
.row {
  display: flex;
  gap: 4px;
}
.paragraph .row {
  gap: 3px;
}
.cluster {
  height: 22px;
  display: flex;
  border: 1px solid #9ebae1;
  border-radius: 2px;
  background: linear-gradient(#d9e6f6, #cdddf1 48%, #bfd2ec 52%, #d4e5f7);
}
.cluster button {
  width: 22px;
  white-space: nowrap;
}
.cluster .drop {
  width: 32px;
  gap: 5px;
}
.combos {
  display: flex;
}
.combo {
  position: relative;
  height: 22px;
}
.combo::after {
  content: "";
  position: absolute;
  right: 5px;
  top: 9px;
  width: 5px;
  height: 3px;
  background-color: #5a7cb0;
  clip-path: polygon(0 0, 100% 0, 50% 100%);
}
.combo select {
  appearance: none;
  width: 100%;
  height: 22px;
  padding: 0 2px;
  border: 1px solid #abc1de;
  border-radius: 0;
  font: inherit;
  color: #111;
  background-color: #eaf2fb;
}
.family {
  width: 118px;
}
.size {
  width: 60px;
}
.serif {
  font-family: "Liberation Serif", serif;
  font-size: 15px;
  font-weight: bold;
  color: #222;
}
.grow {
  font-size: 17px;
}
.shrink {
  font-size: 13px;
}
.grow .caret,
.shrink .caret {
  margin-bottom: 10px;
}
.serif.small {
  font-size: 13px;
}
.wide button {
  width: 23px;
}
.wide .drop {
  width: 35px;
  gap: 9px;
}
.wide .small {
  width: 24px;
}
.wide .tight {
  width: 27px;
  gap: 2px;
}
sub,
sup {
  font-size: 7px;
  line-height: 7px;
  color: #2f5fb0;
}
sub {
  padding-top: 8px;
}
sup {
  padding-bottom: 8px;
}
.cluster .pilcrow {
  font-family: "Liberation Sans", sans-serif;
  font-size: 16px;
  font-weight: bold;
  color: #333;
}
.lists button {
  width: 34px;
  gap: 6px;
}
.lists button:last-child {
  width: 28px;
  gap: 2px;
}
.cluster .spacing {
  width: 30px;
  gap: 3px;
}
.aligns .on {
  background: linear-gradient(#fbd58f, #f9b85c 48%, #fbc76b 52%, #fee08e);
  outline: 1px solid #c2a373;
}
.cluster.aligns button {
  width: 23px;
}

/* style gallery */
.styles .group-body {
  padding: 4px 4px 3px 5px;
  gap: 5px;
}
.gallery {
  height: 60px;
  display: flex;
  border: 1px solid #b4cbe8;
  background-color: #d4e3f4;
}
.style {
  width: 72px;
  padding: 4px 3px 3px;
  flex-direction: column;
  align-items: stretch;
  justify-content: flex-start;
  border: 1px solid transparent;
}
.style.selected {
  border: 2px solid #eeb24a;
  border-top-color: #c28a30;
  padding: 3px 2px 2px;
}
.sample {
  height: 32px;
  padding: 0 3px;
  line-height: 32px;
  text-align: left;
  white-space: nowrap;
  overflow: hidden;
  color: #000;
  background-color: #fff;
  border-right: 3px solid #fff;
}
.style-name {
  height: 17px;
  background-color: #fff;
  color: #15156b;
}
.s-legend {
  font-size: 10px;
  font-style: italic;
  color: #5a6b85;
}
.s-normal {
  font-size: 12px;
}
.s-bold {
  font-family: "Liberation Sans", sans-serif;
  font-size: 16px;
  font-weight: bold;
}
.s-light {
  font-size: 17px;
  font-weight: 300;
  color: #44618f;
}
.s-large {
  font-family: "Liberation Sans", sans-serif;
  font-size: 20px;
  font-weight: bold;
}
.gallery-scroll {
  width: 14px;
  display: flex;
  flex-direction: column;
}
.gallery-scroll button {
  flex: 1;
  border: 1px solid #a5bfdf;
  background: linear-gradient(#e4eefa, #c6d9f1);
}
.gallery-scroll .off {
  background: #ececee;
}
.big.change-styles {
  width: 44px;
  padding-top: 0;
  line-height: 13px;
  white-space: nowrap;
}
.change-styles .arrow {
  vertical-align: middle;
}

/* document area */
.workspace {
  flex: 1;
  min-height: 0;
  display: flex;
  position: relative;
  background: linear-gradient(#a5c4ec, #8baad8 28%, #6f94c4 48%, #527bb0 68%, #6692ce);
}
.swoosh {
  position: absolute;
  left: 0;
  top: 0;
}
.canvas {
  flex: 1;
  position: relative;
  display: flex;
  justify-content: center;
  padding: 6px 0 0 2px;
  overflow: hidden;
}
.page {
  width: 795px;
  padding: 8px 0 0 88px;
  border-left: 1px solid #56657b;
  box-shadow: 3px 0 5px rgba(30, 50, 80, 0.7);
  background-color: #fff;
  color: #000;
  font-family: Lato, "Open Sans", sans-serif;
  font-size: 12px;
}
table {
  width: 637px;
  table-layout: fixed;
  border-collapse: collapse;
}
td,
th {
  height: 29px;
  padding: 0 7px;
  border: 1px solid #000;
  vertical-align: top;
  text-align: left;
  line-height: 15px;
}
.scenes td {
  height: 74px;
}
.scenes .cut td {
  height: 58px;
}
.scenes .action {
  line-height: 17px;
}
.crew {
  margin-top: -1px;
}
th {
  font-size: 11px;
  line-height: 17px;
}
.band th {
  text-align: center;
  background-color: #d9d9d9;
}
.w47 { width: 47px; }
.w72 { width: 72px; }
.w75 { width: 75px; }
.w80 { width: 80px; }
.w82 { width: 82px; }
.w93 { width: 93px; }
.w94 { width: 94px; }
.w95 { width: 95px; }
.w130 { width: 130px; }
.w154 { width: 154px; }
.w162 { width: 162px; }
.w188 { width: 188px; }

.scrollbar {
  position: relative;
  width: 17px;
  display: flex;
  flex-direction: column;
  align-items: center;
  padding: 4px 0 2px;
  border-left: 1px solid #c3d9f7;
  background-color: #abc8f4;
}
.split {
  width: 9px;
  height: 2px;
  margin-bottom: 2px;
  background-color: #3d4a63;
}
.plain {
  height: 16px;
}
.scroll-btn {
  width: 15px;
  height: 16px;
  margin: 1px 0;
  border: 1px solid #5f79a6;
  border-radius: 1px;
  background: linear-gradient(90deg, #f5f8fd, #cfdaec);
}
.scroll-btn .caret {
  width: 9px;
  height: 5px;
}
.track {
  flex: 1;
  width: 14px;
  position: relative;
  background: linear-gradient(90deg, #6f8fbc, #86a4cd);
}
.thumb {
  position: absolute;
  top: 83%;
  left: 0;
  width: 14px;
  height: 7px;
  border: 1px solid #5f79a6;
  background: linear-gradient(90deg, #f5f8fd, #cfdaec);
}

/* status bar */
.statusbar {
  flex: none;
  height: 22px;
  display: flex;
  border-top: 1px solid #567db1;
  background: linear-gradient(#e2eefd, #cfe1fa 35%, #a9caf7 45%, #c5dcfa);
}
.status-item {
  padding: 2px 8px 0;
  border-right: 1px solid #8fb1e0;
  line-height: 15px;
}
.proof {
  width: 34px;
}
.status-right {
  margin-left: auto;
  padding: 0 6px;
  display: flex;
  align-items: center;
  border-left: 1px solid #7398cf;
  background: linear-gradient(#b5d1f7, #8db3e8 45%, #75a0e0 50%, #94baee);
}
.views {
  display: flex;
  border: 1px solid #6f95cd;
  border-radius: 2px;
  background-color: #b3cdf2;
}
.views button {
  width: 18px;
  height: 18px;
}
.views .on {
  background: linear-gradient(#fde3ae, #f8b755);
}
.zoom-value {
  width: 43px;
}
.zoom-slider {
  appearance: none;
  width: 102px;
  height: 16px;
  margin: 0;
  background: linear-gradient(#e8f1fd, #e8f1fd) center / 100% 1px no-repeat;
}
.zoom-slider::-webkit-slider-thumb {
  appearance: none;
  width: 9px;
  height: 12px;
  border: 1px solid #4a6898;
  border-radius: 1px 1px 4px 4px;
  background-color: #d9e7fb;
}

/* taskbar */
.taskbar {
  flex: none;
  height: 40px;
  display: flex;
  gap: 1px;
  background-color: #d5d5d5;
  color: #111;
}
.taskbar > button {
  width: 48px;
}
.taskbar .running {
  background: linear-gradient(#0f76d3, #0f76d3) bottom / 40px 2px no-repeat;
}
.taskbar .current {
  background-color: #efefef;
  background-size: 48px 2px;
}
.tray {
  margin-left: auto;
  display: flex;
  padding-right: 5px;
}
.tray button {
  width: 25px;
}
.tray .weather {
  width: auto;
  margin-right: 13px;
  gap: 8px;
  font-size: 13px;
  white-space: nowrap;
}
.tray .clock {
  width: 66px;
  flex-direction: column;
  line-height: 18px;
}
.tray .notify {
  width: 50px;
  position: relative;
  border-right: 1px solid #aaa;
}
.badge {
  position: absolute;
  left: 22px;
  top: 19px;
  width: 17px;
  height: 17px;
  border: 1px solid #777;
  border-radius: 50%;
  background-color: #d5d5d5;
  line-height: 15px;
}
```
